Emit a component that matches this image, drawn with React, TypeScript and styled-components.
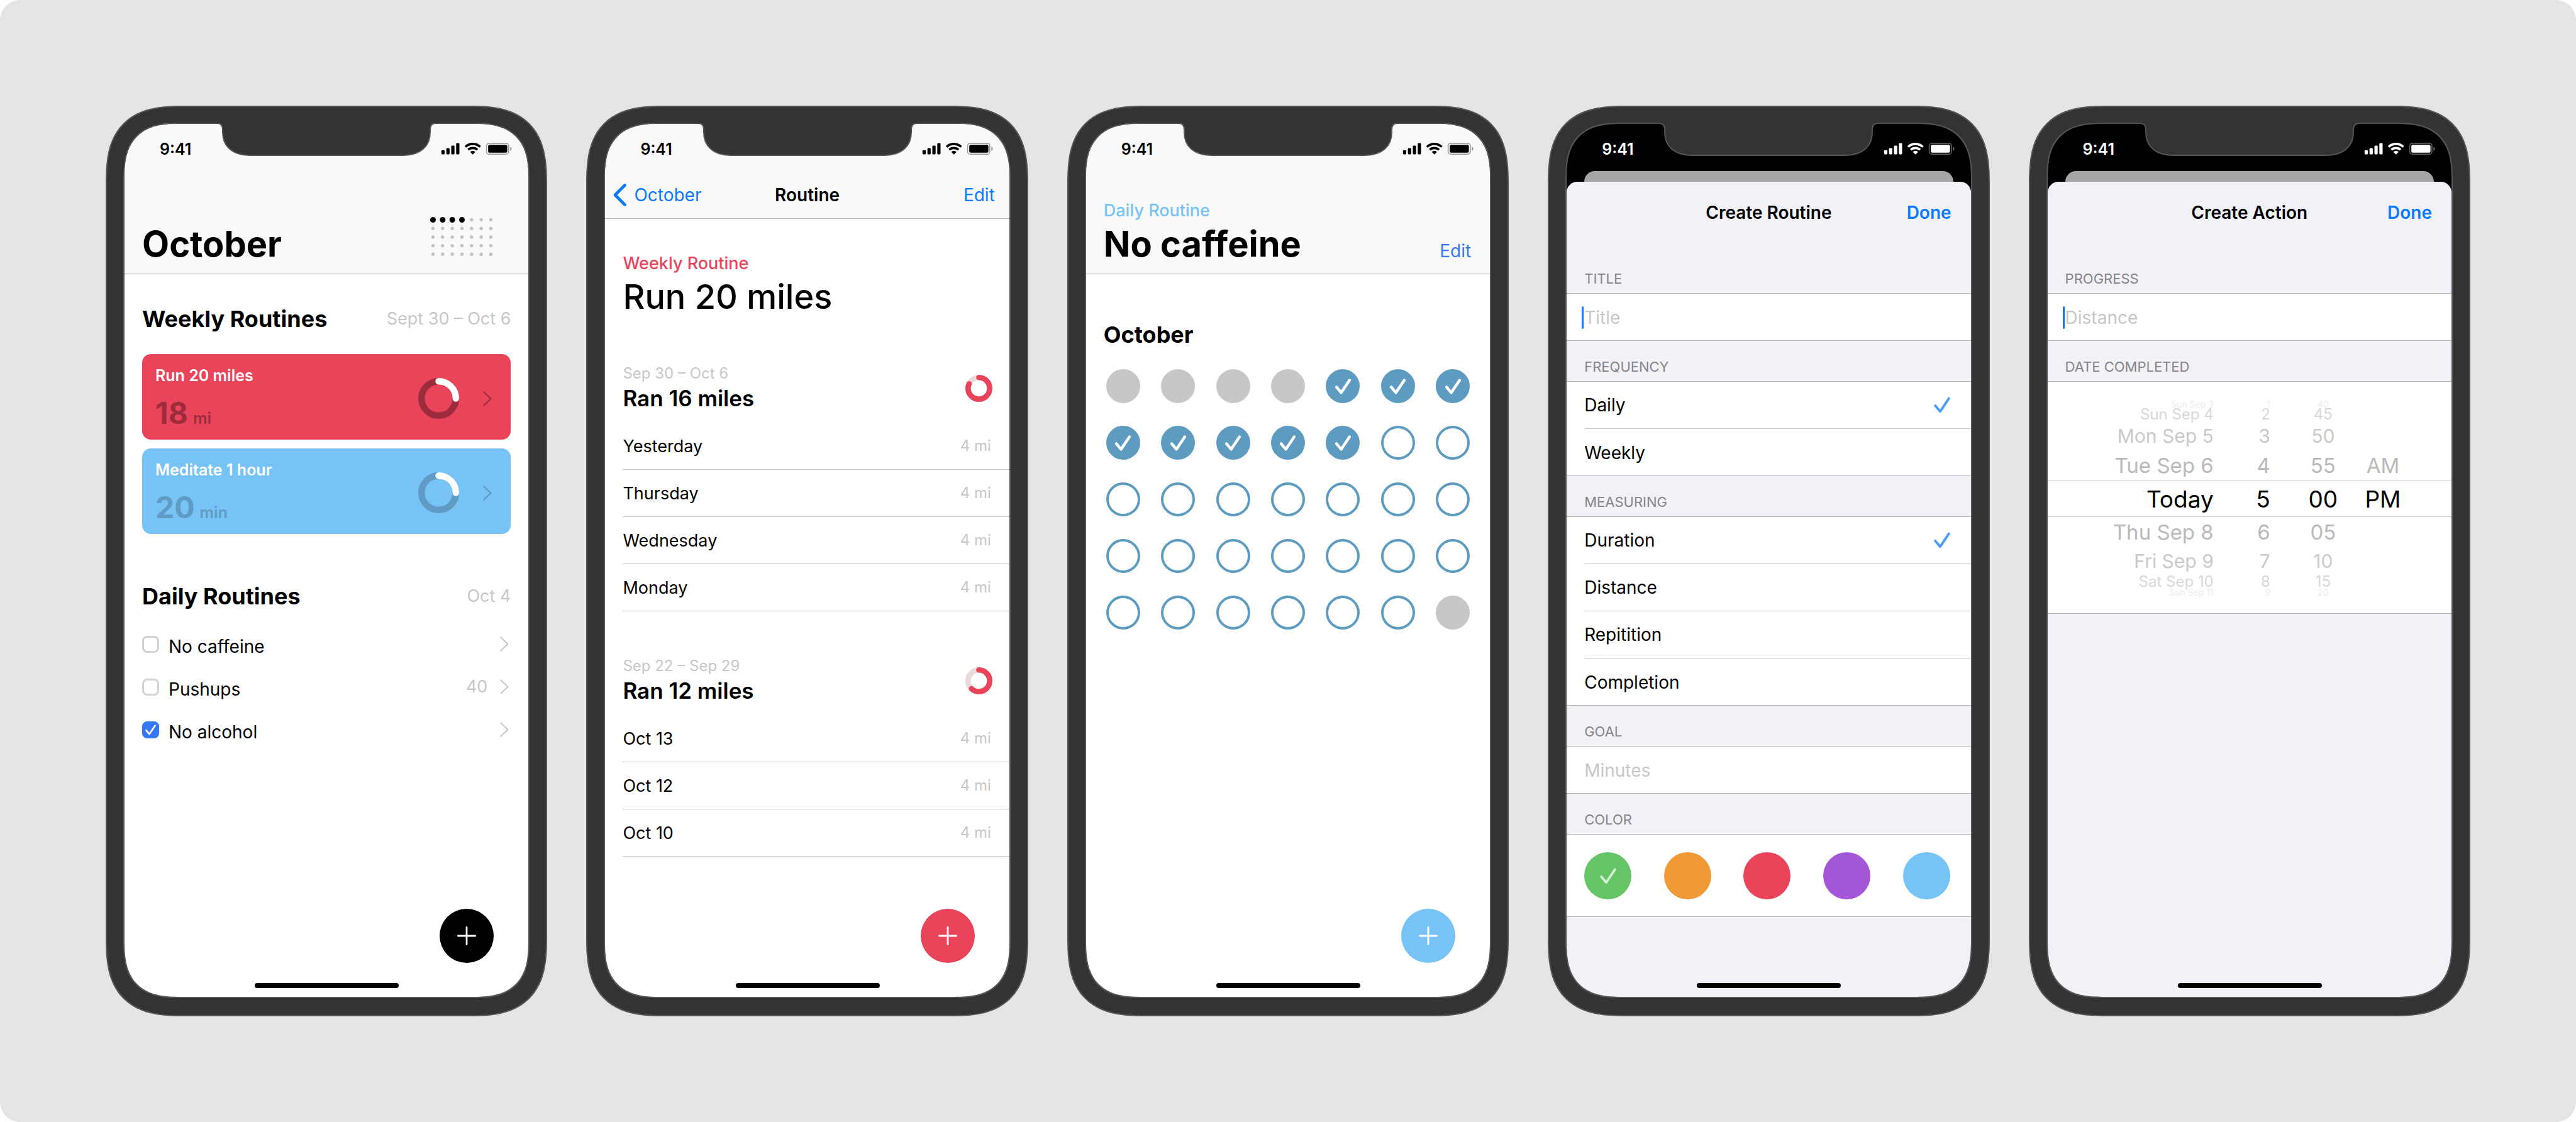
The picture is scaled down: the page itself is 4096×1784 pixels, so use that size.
import React, { useState } from "react";
import styled, { createGlobalStyle, css } from "styled-components";

const color = {
  page: "#e5e5e5",
  body: "#333333",
  outline: "#555555",
  bar: "#f9f9f9",
  grouped: "#f2f1f7",
  line: "#c4c4c6",
  barLine: "#b2b2b2",
  muted: "#c7c7c8",
  label: "#858589",
  link: "#0a7aff",
  edit: "#3478f6",
  red: "#ea445a",
  redDark: "#9c2c3c",
  blue: "#77c3f5",
  blueDark: "#5f9bc4",
  day: "#5e9bc1",
  green: "#65c466",
  orange: "#f09a37",
  purple: "#a357d7",
};

const Global = createGlobalStyle`
  * { box-sizing: border-box; }
  body { margin: 0; background: #ffffff; }
  body, button, input {
    font-family: Inter, "Liberation Sans", sans-serif;
    color: #000000;
  }
  button { background: none; border: 0; padding: 0; cursor: pointer; }
  h1, h2, h3, p, ul { margin: 0; padding: 0; }
  ul { list-style: none; }
  svg { display: block; flex: none; }
`;

/* ---------- Stage and device ---------- */

const Stage = styled.main`
  min-height: 100vh;
  padding: 168px;
  display: grid;
  grid-template-columns: repeat(5, minmax(0, 1fr));
  gap: 62px;
  background: ${color.page};
  border-radius: 32px;
`;

const Device = styled.section`
  position: relative;
  display: flex;
  padding: 25px 26px 27px;
  background: ${color.body};
  border: 2px solid ${color.outline};
  border-radius: 98px;
  @supports (corner-shape: superellipse(1.45)) {
    border-radius: 125px;
    corner-shape: superellipse(1.45);
  }
`;

const Screen = styled.div<{ $dark?: boolean }>`
  position: relative;
  flex: 1;
  min-width: 0;
  display: flex;
  flex-direction: column;
  overflow: hidden;
  background: ${(p) => (p.$dark ? "#000000" : "#ffffff")};
  border: 2px solid ${color.outline};
  border-radius: 70px;
  @supports (corner-shape: superellipse(1.45)) {
    border-radius: 92px;
    corner-shape: superellipse(1.45);
  }
`;

const NotchShape = styled.svg`
  position: absolute;
  top: 25px;
  left: 50%;
  transform: translateX(-50%);
`;

const HomeIndicator = styled.div`
  position: absolute;
  left: 50%;
  bottom: 14px;
  width: 229px;
  height: 8px;
  margin-left: -114px;
  border-radius: 4px;
  background: #000000;
`;

const StatusBar = styled.div<{ $light?: boolean }>`
  height: 75px;
  flex: none;
  padding: 4px 25px 0 56px;
  display: flex;
  align-items: center;
  justify-content: space-between;
  font-size: 25px;
  line-height: 30px;
  font-weight: 600;
  color: ${(p) => (p.$light ? "#ffffff" : "#000000")};
`;

const Fab = styled.button<{ $bg: string }>`
  position: absolute;
  right: 55px;
  bottom: 54px;
  width: 86px;
  height: 86px;
  border-radius: 50%;
  display: grid;
  place-items: center;
  background: ${(p) => p.$bg};
`;

/* ---------- Shared type ---------- */

const LargeTitle = styled.h1`
  font-size: 56px;
  line-height: 70px;
  font-weight: 700;
`;

const RoutineTitle = styled.h2`
  font-size: 54px;
  line-height: 70px;
  font-weight: 500;
`;

const Eyebrow = styled.p<{ $color: string }>`
  font-size: 27px;
  line-height: 36px;
  font-weight: 500;
  color: ${(p) => p.$color};
`;

const Heading = styled.h2<{ $weight?: number }>`
  font-size: ${(p) => (p.$weight ? 35 : 36)}px;
  line-height: 44px;
  font-weight: ${(p) => p.$weight ?? 700};
`;

const Muted = styled.span<{ $small?: boolean }>`
  font-size: ${(p) => (p.$small ? 24 : 27)}px;
  line-height: 30px;
  color: ${color.muted};
`;

const TextButton = styled.button<{ $color?: string; $weight?: number }>`
  font-size: 28px;
  line-height: 36px;
  font-weight: ${(p) => p.$weight ?? 400};
  color: ${(p) => p.$color ?? color.link};
`;

/* ---------- Bars ---------- */

const LargeBar = styled.header`
  height: 239px;
  display: flex;
  flex-direction: column;
  background: ${color.bar};
  border-bottom: 1px solid ${color.barLine};
`;

const LargeBarRow = styled.div<{ $inset: number; $lift: number }>`
  flex: 1;
  padding: 0 ${(p) => p.$inset}px 12px 28px;
  display: flex;
  align-items: flex-end;
  justify-content: space-between;
  > :last-child {
    margin-bottom: ${(p) => p.$lift}px;
  }
`;

const CompactBar = styled.header`
  height: 151px;
  background: ${color.bar};
  border-bottom: 1px solid ${color.barLine};
`;

const NavRow = styled.div<{ $tall?: boolean }>`
  height: ${(p) => (p.$tall ? 97 : 75)}px;
  padding: 0 ${(p) => (p.$tall ? 31 : 23)}px;
  display: grid;
  grid-template-columns: 1fr auto 1fr;
  align-items: center;
  > :last-child {
    justify-self: end;
  }
`;

const NavTitle = styled.h1`
  font-size: 28px;
  line-height: 36px;
  font-weight: 600;
`;

const BackLink = styled.a`
  display: flex;
  align-items: center;
  gap: 12px;
  margin-left: -10px;
  font-size: 28px;
  line-height: 36px;
  color: ${color.link};
  text-decoration: none;
`;

/* ---------- Month overview ---------- */

const Overview = styled.div`
  padding: 49px 28px 0;
  display: flex;
  flex-direction: column;
`;

const SectionHead = styled.div`
  display: flex;
  align-items: center;
  justify-content: space-between;
`;

const CardStack = styled.div`
  margin: 34px 0 77px;
  display: flex;
  flex-direction: column;
  gap: 14px;
`;

const Card = styled.button<{ $bg: string; $ink: string }>`
  padding: 19px 30px 14px 21px;
  display: flex;
  align-items: center;
  border-radius: 14px;
  text-align: left;
  background: ${(p) => p.$bg};
  color: ${(p) => p.$ink};
`;

const CardText = styled.span`
  flex: 1;
  display: flex;
  flex-direction: column;
  gap: 17px;
`;

const CardTitle = styled.span`
  font-size: 25px;
  line-height: 30px;
  font-weight: 600;
  color: #ffffff;
`;

const CardValue = styled.span`
  display: flex;
  align-items: baseline;
  gap: 8px;
  font-size: 48px;
  line-height: 56px;
  font-weight: 700;
`;

const CardUnit = styled.span`
  font-size: 25px;
  line-height: 30px;
  font-weight: 600;
`;

const CardMarks = styled.span`
  display: flex;
  align-items: center;
  gap: 38px;
`;

const TaskList = styled.ul`
  margin-top: 20px;
`;

const Task = styled.li`
  height: 68px;
  display: flex;
  align-items: center;
  gap: 20px;
  padding-right: 3px;
`;

const TaskLabel = styled.label`
  flex: 1;
  display: flex;
  align-items: center;
  gap: 15px;
  font-size: 28px;
  line-height: 36px;
`;

const TaskName = styled.span`
  padding-top: 7px;
`;

const Stacked = styled.span`
  display: inline-grid;
  place-items: center;
  flex: none;
  > * {
    grid-area: 1 / 1;
  }
  > svg {
    pointer-events: none;
  }
`;

const BareInput = css`
  appearance: none;
  margin: 0;
  outline: none;
`;

const TaskBox = styled.input`
  ${BareInput}
  width: 27px;
  height: 27px;
  border: 3px solid #d3d3d4;
  border-radius: 8px;
  &:checked {
    background: ${color.edit};
    border-color: ${color.edit};
  }
`;

/* ---------- Weekly routine ---------- */

const History = styled.div`
  padding: 53px 0 0 28px;
`;

const Week = styled.section`
  margin-top: 72px;
`;

const WeekHead = styled.div`
  margin-bottom: 17px;
  padding-right: 27px;
  display: flex;
  align-items: center;
  justify-content: space-between;
`;

const WeekTitles = styled.div`
  display: flex;
  flex-direction: column;
  gap: 2px;
`;

const Entry = styled.li`
  height: 75px;
  padding-right: 29px;
  display: flex;
  align-items: center;
  justify-content: space-between;
  border-bottom: 1px solid ${color.line};
  font-size: 27px;
`;

/* ---------- Daily calendar ---------- */

const Month = styled.div`
  padding: 74px 28px 0;
`;

const Days = styled.div`
  margin: 33px 4px 0;
  display: grid;
  grid-template-columns: repeat(7, 54px);
  justify-content: space-between;
  row-gap: 36px;
`;

const DayBox = styled.input`
  ${BareInput}
  width: 54px;
  height: 54px;
  border: 4px solid ${color.day};
  border-radius: 50%;
  &:checked {
    background: ${color.day};
  }
  &:disabled {
    background: ${color.muted};
    border-color: ${color.muted};
  }
`;

/* ---------- Sheets ---------- */

const BackSheet = styled.div`
  height: 17px;
  flex: none;
  margin: 0 28px;
  border-radius: 17px 17px 0 0;
  background: #a6a6a6;
`;

const Sheet = styled.form`
  flex: 1;
  background: ${color.grouped};
  border-radius: 17px 17px 0 0;
`;

const Groups = styled.div`
  padding-top: 16px;
`;

const GroupLabel = styled.h2`
  height: 65px;
  padding: 0 28px 8px;
  display: flex;
  align-items: flex-end;
  border-bottom: 1px solid ${color.barLine};
  font-size: 22px;
  line-height: 30px;
  font-weight: 400;
  color: ${color.label};
`;

const GroupBody = styled.div`
  background: #ffffff;
  box-shadow: inset 0 -1px ${color.barLine};
`;

const Option = styled.label`
  height: 75px;
  margin-left: 28px;
  padding-right: 33px;
  display: flex;
  align-items: center;
  justify-content: space-between;
  font-size: 28px;
  line-height: 36px;
  &:not(:last-child) {
    border-bottom: 1px solid ${color.line};
  }
`;

const OptionRadio = styled.input`
  ${BareInput}
  width: 26px;
  height: 26px;
`;

const Field = styled.div`
  height: 75px;
  padding: 0 28px 0 24px;
  display: flex;
  align-items: center;
`;

const Caret = styled.span<{ $on?: boolean }>`
  width: 3px;
  height: 36px;
  margin-right: 1px;
  border-radius: 2px;
  background: ${(p) => (p.$on ? color.link : "transparent")};
`;

const TextInput = styled.input`
  flex: 1;
  min-width: 0;
  height: 36px;
  padding: 0;
  border: 0;
  outline: none;
  background: none;
  font-size: 28px;
  &::placeholder {
    color: ${color.muted};
    opacity: 1;
  }
`;

const Swatches = styled.div`
  padding: 28px 33px 28px 28px;
  display: flex;
  justify-content: space-between;
`;

const SwatchRadio = styled.input<{ $bg: string }>`
  ${BareInput}
  width: 75px;
  height: 75px;
  border-radius: 50%;
  background: ${(p) => p.$bg};
`;

/* ---------- Date wheel ---------- */

const Wheel = styled.div`
  padding: 30px 0 28px;
`;

const WheelRow = styled.div<{ $height: number; $size: number; $ink: string; $current?: boolean }>`
  height: ${(p) => p.$height}px;
  display: grid;
  grid-template-columns: 264fr 90fr 128fr 102fr 58fr;
  align-items: center;
  font-size: ${(p) => p.$size}px;
  line-height: ${(p) => p.$height}px;
  color: ${(p) => p.$ink};
  border: 0 solid #cfcfd1;
  border-width: ${(p) => (p.$current ? "1px 0" : "0")};
`;

const WheelCell = styled.button<{ $align: string }>`
  font-size: inherit;
  line-height: inherit;
  color: inherit;
  height: 100%;
  text-align: ${(p) => p.$align};
  &:nth-child(3) {
    padding-left: 40px;
  }
`;

/* ---------- Drawings ---------- */

const Notch = () => (
  <NotchShape width="348" height="54" viewBox="0 0 348 54" aria-hidden="true">
    <path
      d="M0 0V1C6 1 9 5 9 11V15C9 37 24 52 52 52H296C324 52 339 37 339 15V11C339 5 342 1 348 1V0Z"
      fill={color.body}
    />
    <path
      d="M0 1C6 1 9 5 9 11V15C9 37 24 52 52 52H296C324 52 339 37 339 15V11C339 5 342 1 348 1"
      fill="none"
      stroke={color.outline}
      strokeWidth="2"
    />
  </NotchShape>
);

const StatusIcons = () => (
  <svg width="114" height="19" viewBox="30 17 201 34" fill="currentColor" aria-hidden="true">
    <rect x="30" y="38" width="9.3" height="12" rx="2.6" />
    <rect x="44" y="32" width="9.3" height="18" rx="2.6" />
    <rect x="58" y="25" width="9.3" height="25" rx="2.6" />
    <rect x="72" y="18" width="9.3" height="32" rx="2.6" />
    <path d="M98.3 28.6A31 31 0 0 1 140.3 28.6" fill="none" stroke="currentColor" strokeWidth="6.6" />
    <path d="M106.2 37A19.6 19.6 0 0 1 132.4 37" fill="none" stroke="currentColor" strokeWidth="6.4" />
    <path d="M119.3 50.5L111.8 43A11.5 11.5 0 0 1 126.8 43Z" />
    <rect x="158.5" y="18.5" width="63" height="31" rx="7" fill="none" stroke="currentColor" strokeWidth="3" opacity="0.36" />
    <rect x="163" y="23" width="54.5" height="22" rx="4" />
    <path d="M226 28A6.5 6.5 0 0 1 226 40Z" opacity="0.4" />
  </svg>
);

const Chevron = ({ stroke = color.muted }: { stroke?: string }) => (
  <svg width="14" height="24" viewBox="0 0 14 24" fill="none" aria-hidden="true">
    <path d="M1.5 1.5L12.5 12L1.5 22.5" stroke={stroke} strokeWidth="2.2" strokeLinecap="round" strokeLinejoin="round" />
  </svg>
);

const BackChevron = () => (
  <svg width="21" height="36" viewBox="0 0 21 36" fill="none" aria-hidden="true">
    <path d="M18.5 2.5L3 18L18.5 33.5" stroke={color.link} strokeWidth="4.6" strokeLinecap="round" strokeLinejoin="round" />
  </svg>
);

const Check = ({ size = 26, stroke, width = 3.8 }: { size?: number; stroke: string; width?: number }) => (
  <svg width={size} height={size} viewBox="0 0 26 26" fill="none" aria-hidden="true">
    <path d="M2.2 14L10 23.2L23.8 2.6" stroke={stroke} strokeWidth={width} strokeLinecap="round" strokeLinejoin="round" />
  </svg>
);

const Plus = () => (
  <svg width="30" height="30" viewBox="0 0 30 30" aria-hidden="true">
    <path d="M15 1.4V28.6M1.4 15H28.6" stroke="#ffffff" strokeWidth="2.8" strokeLinecap="round" />
  </svg>
);

type RingProps = { size: number; width: number; track: string; stroke: string; value: number };

const Ring = ({ size, width, track, stroke, value }: RingProps) => {
  const r = (size - width) / 2;
  const c = size / 2;
  return (
    <svg width={size} height={size} viewBox={`0 0 ${size} ${size}`} fill="none" strokeWidth={width} aria-hidden="true">
      <circle cx={c} cy={c} r={r} stroke={track} />
      <circle
        cx={c}
        cy={c}
        r={r}
        stroke={stroke}
        strokeLinecap="round"
        pathLength={100}
        strokeDasharray={`${value} 100`}
        transform={`rotate(-90 ${c} ${c})`}
      />
    </svg>
  );
};

const DotCalendar = () => (
  <svg width="101" height="64" viewBox="0 0 101 64" aria-hidden="true">
    {Array.from({ length: 35 }, (_, i) => (
      <circle
        key={i}
        cx={4.5 + (i % 7) * 15.33}
        cy={4.5 + Math.floor(i / 7) * 13.7}
        r={i < 4 ? 4.5 : 2.7}
        fill={i < 4 ? "#000000" : "#c2c2c2"}
      />
    ))}
  </svg>
);

/* ---------- Screens ---------- */

type PhoneProps = { label: string; dark?: boolean; children: React.ReactNode };

const Phone = ({ label, dark, children }: PhoneProps) => (
  <Device aria-label={label}>
    <Screen $dark={dark}>
      {children}
      <HomeIndicator />
    </Screen>
    <Notch />
  </Device>
);

const Status = ({ light }: { light?: boolean }) => (
  <StatusBar $light={light}>
    <span>9:41</span>
    <StatusIcons />
  </StatusBar>
);

const AddButton = ({ bg }: { bg: string }) => (
  <Fab type="button" $bg={bg} aria-label="Add">
    <Plus />
  </Fab>
);

const cards = [
  { title: "Run 20 miles", value: "18", unit: "mi", bg: color.red, ink: color.redDark },
  { title: "Meditate 1 hour", value: "20", unit: "min", bg: color.blue, ink: color.blueDark },
];

const tasks = [
  { name: "No caffeine", count: "", done: false },
  { name: "Pushups", count: "40", done: false },
  { name: "No alcohol", count: "", done: true },
];

const OverviewScreen = () => {
  const [done, setDone] = useState(tasks.map((t) => t.done));
  return (
    <Phone label="Month overview">
      <LargeBar>
        <Status />
        <LargeBarRow $inset={55} $lift={14}>
          <LargeTitle>October</LargeTitle>
          <DotCalendar />
        </LargeBarRow>
      </LargeBar>
      <Overview>
        <SectionHead>
          <Heading>Weekly Routines</Heading>
          <Muted>Sept 30 – Oct 6</Muted>
        </SectionHead>
        <CardStack>
          {cards.map((c) => (
            <Card type="button" key={c.title} $bg={c.bg} $ink={c.ink}>
              <CardText>
                <CardTitle>{c.title}</CardTitle>
                <CardValue>
                  {c.value}
                  <CardUnit>{c.unit}</CardUnit>
                </CardValue>
              </CardText>
              <CardMarks>
                <Ring size={65} width={10.4} track={c.ink} stroke="#ffffff" value={25} />
                <Chevron stroke={c.ink} />
              </CardMarks>
            </Card>
          ))}
        </CardStack>
        <SectionHead>
          <Heading>Daily Routines</Heading>
          <Muted>Oct 4</Muted>
        </SectionHead>
        <TaskList>
          {tasks.map((t, i) => (
            <Task key={t.name}>
              <TaskLabel>
                <Stacked>
                  <TaskBox
                    type="checkbox"
                    checked={done[i]}
                    onChange={() => setDone(done.map((d, j) => (j === i ? !d : d)))}
                  />
                  {done[i] && <Check size={17} stroke="#ffffff" width={4} />}
                </Stacked>
                <TaskName>{t.name}</TaskName>
              </TaskLabel>
              {t.count && <Muted>{t.count}</Muted>}
              <Chevron />
            </Task>
          ))}
        </TaskList>
      </Overview>
      <AddButton bg="#000000" />
    </Phone>
  );
};

const weeks = [
  { range: "Sep 30 – Oct 6", total: "Ran 16 miles", value: 82, days: ["Yesterday", "Thursday", "Wednesday", "Monday"] },
  { range: "Sep 22 – Sep 29", total: "Ran 12 miles", value: 62, days: ["Oct 13", "Oct 12", "Oct 10"] },
];

const RoutineScreen = () => (
  <Phone label="Weekly routine">
    <CompactBar>
      <Status />
      <NavRow>
        <BackLink href="#october">
          <BackChevron />
          October
        </BackLink>
        <NavTitle>Routine</NavTitle>
        <TextButton type="button">Edit</TextButton>
      </NavRow>
    </CompactBar>
    <History>
      <Eyebrow $color={color.red}>Weekly Routine</Eyebrow>
      <RoutineTitle>Run 20 miles</RoutineTitle>
      {weeks.map((w) => (
        <Week key={w.range}>
          <WeekHead>
            <WeekTitles>
              <Muted $small>{w.range}</Muted>
              <Heading as="h3" $weight={600}>{w.total}</Heading>
            </WeekTitles>
            <Ring size={43} width={8.6} track="#ebdadc" stroke={color.red} value={w.value} />
          </WeekHead>
          <ul>
            {w.days.map((d) => (
              <Entry key={d}>
                <span>{d}</span>
                <Muted $small>4 mi</Muted>
              </Entry>
            ))}
          </ul>
        </Week>
      ))}
    </History>
    <AddButton bg={color.red} />
  </Phone>
);

const CalendarScreen = () => {
  const [marked, setMarked] = useState(Array.from({ length: 35 }, (_, i) => i >= 4 && i < 12));
  return (
    <Phone label="Daily routine">
      <LargeBar>
        <Status />
        <LargeBarRow $inset={30} $lift={6}>
          <div>
            <Eyebrow $color={color.blue}>Daily Routine</Eyebrow>
            <LargeTitle>No caffeine</LargeTitle>
          </div>
          <TextButton type="button" $color={color.edit}>Edit</TextButton>
        </LargeBarRow>
      </LargeBar>
      <Month>
        <Heading>October</Heading>
        <Days>
          {marked.map((on, i) => (
            <Stacked as="label" key={i}>
              <DayBox
                type="checkbox"
                aria-label={`Day ${i - 3}`}
                checked={on}
                disabled={i < 4 || i === 34}
                onChange={() => setMarked(marked.map((m, j) => (j === i ? !m : m)))}
              />
              {on && <Check size={25} stroke="#ffffff" width={4.6} />}
            </Stacked>
          ))}
        </Days>
      </Month>
      <AddButton bg={color.blue} />
    </Phone>
  );
};

type ChoiceProps = { name: string; options: string[] };

const Choice = ({ name, options }: ChoiceProps) => {
  const [picked, setPicked] = useState(options[0]);
  return (
    <GroupBody role="radiogroup" aria-label={name}>
      {options.map((o) => (
        <Option key={o}>
          {o}
          <Stacked>
            <OptionRadio type="radio" name={name} checked={picked === o} onChange={() => setPicked(o)} />
            {picked === o && <Check stroke="#489bff" />}
          </Stacked>
        </Option>
      ))}
    </GroupBody>
  );
};

type EntryFieldProps = { label: string; placeholder: string; focused?: boolean };

const EntryField = ({ label, placeholder, focused }: EntryFieldProps) => (
  <GroupBody>
    <Field>
      <Caret $on={focused} />
      <TextInput type="text" aria-label={label} placeholder={placeholder} />
    </Field>
  </GroupBody>
);

const SheetNav = ({ title }: { title: string }) => (
  <NavRow $tall>
    <span />
    <NavTitle>{title}</NavTitle>
    <TextButton type="button" $weight={600}>Done</TextButton>
  </NavRow>
);

const swatches = [
  { name: "Green", bg: color.green },
  { name: "Orange", bg: color.orange },
  { name: "Red", bg: color.red },
  { name: "Purple", bg: color.purple },
  { name: "Blue", bg: color.blue },
];

const CreateRoutineScreen = () => {
  const [tint, setTint] = useState("Green");
  return (
    <Phone label="Create routine" dark>
      <Status light />
      <BackSheet />
      <Sheet>
        <SheetNav title="Create Routine" />
        <Groups>
          <GroupLabel>TITLE</GroupLabel>
          <EntryField label="Title" placeholder="Title" focused />
          <GroupLabel>FREQUENCY</GroupLabel>
          <Choice name="frequency" options={["Daily", "Weekly"]} />
          <GroupLabel>MEASURING</GroupLabel>
          <Choice name="measuring" options={["Duration", "Distance", "Repitition", "Completion"]} />
          <GroupLabel>GOAL</GroupLabel>
          <EntryField label="Goal" placeholder="Minutes" />
          <GroupLabel>COLOR</GroupLabel>
          <GroupBody>
            <Swatches>
              {swatches.map((s) => (
                <Stacked as="label" key={s.name}>
                  <SwatchRadio
                    type="radio"
                    name="color"
                    aria-label={s.name}
                    $bg={s.bg}
                    checked={tint === s.name}
                    onChange={() => setTint(s.name)}
                  />
                  {tint === s.name && <Check stroke="#d3efd4" />}
                </Stacked>
              ))}
            </Swatches>
          </GroupBody>
        </Groups>
      </Sheet>
    </Phone>
  );
};

const wheel = [
  { cells: ["Sun Sep 3", "1", "40"], height: 12, size: 14, ink: "#ececec" },
  { cells: ["Sun Sep 4", "2", "45"], height: 20, size: 24, ink: "#d8d8d8" },
  { cells: ["Mon Sep 5", "3", "50"], height: 48, size: 30, ink: "#c9c9c9" },
  { cells: ["Tue Sep 6", "4", "55", "AM"], height: 46, size: 33, ink: "#b9b9b9" },
  { cells: ["Today", "5", "00", "PM"], height: 59, size: 37, ink: "#000000", current: true },
  { cells: ["Thu Sep 8", "6", "05"], height: 48, size: 33, ink: "#b9b9b9" },
  { cells: ["Fri Sep 9", "7", "10"], height: 44, size: 30, ink: "#c9c9c9" },
  { cells: ["Sat Sep 10", "8", "15"], height: 22, size: 24, ink: "#d8d8d8" },
  { cells: ["Sun Sep 11", "9", "20"], height: 12, size: 14, ink: "#ececec" },
];

const CreateActionScreen = () => (
  <Phone label="Create action" dark>
    <Status light />
    <BackSheet />
    <Sheet>
      <SheetNav title="Create Action" />
      <Groups>
        <GroupLabel>PROGRESS</GroupLabel>
        <EntryField label="Progress" placeholder="Distance" focused />
        <GroupLabel>DATE COMPLETED</GroupLabel>
        <GroupBody>
          <Wheel role="group" aria-label="Date completed">
            {wheel.map((row) => (
              <WheelRow key={row.cells[0]} $height={row.height} $size={row.size} $ink={row.ink} $current={row.current}>
                {row.cells.map((cell, i) => (
                  <WheelCell type="button" key={i} $align={i < 2 ? "right" : "center"}>
                    {cell}
                  </WheelCell>
                ))}
              </WheelRow>
            ))}
          </Wheel>
        </GroupBody>
      </Groups>
    </Sheet>
  </Phone>
);

export default function App() {
  return (
    <>
      <Global />
      <Stage>
        <OverviewScreen />
        <RoutineScreen />
        <CalendarScreen />
        <CreateRoutineScreen />
        <CreateActionScreen />
      </Stage>
    </>
  );
}
